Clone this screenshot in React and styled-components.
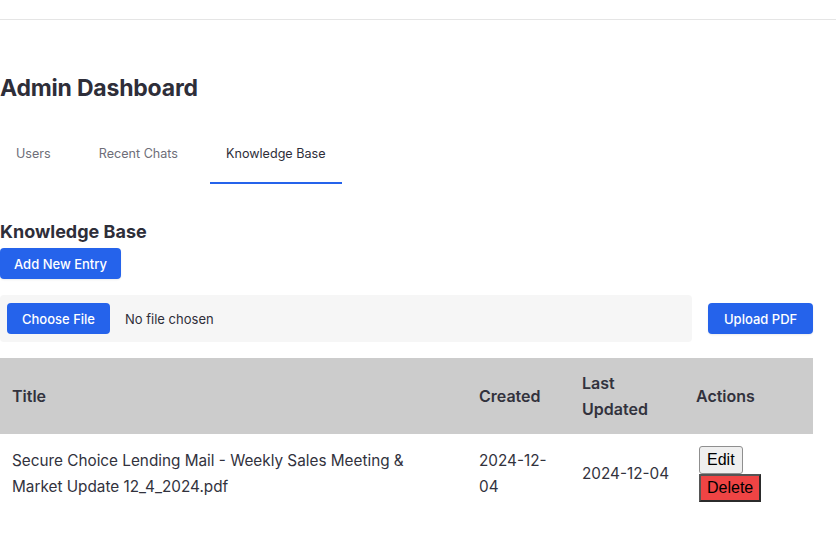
import styled, { createGlobalStyle } from 'styled-components';

const GlobalStyle = createGlobalStyle`
  body {
    margin: 0;
    background: #ffffff;
    font-family: Inter, "Noto Sans", sans-serif;
    color: #32323d;
  }
`;

const entries = [
  {
    id: 1,
    title: 'Secure Choice Lending Mail - Weekly Sales Meeting & Market Update 12_4_2024.pdf',
    created: '2024-12-04',
    updated: '2024-12-04',
  },
];

const tabs = ['Users', 'Recent Chats', 'Knowledge Base'];

export default function App() {
  return (
    <>
      <GlobalStyle />
      <StTopBar />
      <StMain>
        <StTitle>Admin Dashboard</StTitle>
        <StTabs>
          {tabs.map((tab) => (
            <StTab key={tab} $active={tab === 'Knowledge Base'}>
              {tab}
            </StTab>
          ))}
        </StTabs>

        <StSectionTitle>Knowledge Base</StSectionTitle>
        <StButton>Add New Entry</StButton>

        <StUploadRow>
          <StFileBox>
            <StFileInput type="file" accept="application/pdf" />
          </StFileBox>
          <StButton $pad={16}>Upload PDF</StButton>
        </StUploadRow>

        <StTable>
          <colgroup>
            <col style={{ width: 467 }} />
            <col style={{ width: 103 }} />
            <col style={{ width: 114 }} />
            <col />
          </colgroup>
          <thead>
            <tr>
              <th>Title</th>
              <th>Created</th>
              <th>Last Updated</th>
              <th>Actions</th>
            </tr>
          </thead>
          <tbody>
            {entries.map((entry) => (
              <tr key={entry.id}>
                <td>{entry.title}</td>
                <td>{entry.created}</td>
                <td>{entry.updated}</td>
                <td>
                  <StActions>
                    <StEditButton>Edit</StEditButton>
                    <StDeleteButton>Delete</StDeleteButton>
                  </StActions>
                </td>
              </tr>
            ))}
          </tbody>
        </StTable>
      </StMain>
    </>
  );
}

const StTopBar = styled.header`
  height: 19px;
  border-bottom: 1px solid #e5e5e5;
`;

const StMain = styled.main`
  width: 813px;
`;

const StTitle = styled.h1`
  margin: 52px 0 0;
  font-size: 23px;
  line-height: 32px;
  font-weight: 700;
  letter-spacing: -0.2px;
  color: #2e2e39;
`;

const StTabs = styled.nav`
  display: flex;
  gap: 16px;
  margin-top: 29px;
`;

const StTab = styled.div`
  padding: 11px 16px 18px;
  font-size: 12.6px;
  line-height: 20px;
  color: ${({ $active }) => ($active ? '#2e2e39' : '#6e6e78')};
  border-bottom: 2px solid ${({ $active }) => ($active ? '#2563eb' : 'transparent')};
  cursor: pointer;
`;

const StSectionTitle = styled.h2`
  margin: 36px 0 0;
  font-size: 18px;
  line-height: 24px;
  font-weight: 700;
  color: #2e2e39;
`;

const StButton = styled.button`
  display: block;
  flex-shrink: 0;
  height: 31px;
  margin-top: 4px;
  padding: 0 ${({ $pad }) => $pad ?? 14}px;
  border: none;
  border-radius: 4px;
  background: #2563eb;
  color: #ffffff;
  font-family: Inter, "Noto Sans", sans-serif;
  font-size: 13px;
  font-weight: 500;
  white-space: nowrap;
  box-shadow: 0 1px 2px rgba(0, 0, 0, 0.08);
  cursor: pointer;
`;

const StUploadRow = styled.div`
  display: flex;
  align-items: center;
  gap: 16px;
  margin-top: 16px;

  ${StButton} {
    margin-top: 0;
  }
`;

const StFileBox = styled.div`
  flex: 0 0 692px;
  box-sizing: border-box;
  padding: 8px 7px;
  background: #f6f6f6;
  border-radius: 4px;
`;

const StFileInput = styled.input`
  display: block;
  font-family: Inter, "Noto Sans", sans-serif;
  font-size: 13px;
  color: #2e2e39;

  &::file-selector-button {
    height: 31px;
    margin-right: 15px;
    padding: 0 15px;
    border: none;
    border-radius: 4px;
    background: #2563eb;
    color: #ffffff;
    font-family: Inter, "Noto Sans", sans-serif;
    font-size: 13px;
    font-weight: 500;
    cursor: pointer;
  }
`;

const StTable = styled.table`
  width: 813px;
  margin-top: 16px;
  border-collapse: collapse;
  table-layout: fixed;
  line-height: 26px;

  th {
    padding: 12px;
    background: #cccccc;
    text-align: left;
    font-size: 16px;
    font-weight: 600;
    color: #32323d;
  }
  td {
    padding: 12px;
    vertical-align: middle;
    font-size: 15.3px;
    color: #32323d;
  }
`;

const StActions = styled.div`
  display: flex;
  flex-direction: column;
  align-items: flex-start;
  padding-left: 3px;
`;

const StEditButton = styled.button`
  box-sizing: border-box;
  height: 28px;
  padding: 0 7px;
  border: 1px solid #8f8f8f;
  border-radius: 3px;
  background: #efefef;
  color: #000000;
  font-family: "Liberation Sans", Arial, sans-serif;
  font-size: 16px;
  cursor: pointer;
`;

const StDeleteButton = styled.button`
  box-sizing: border-box;
  height: 28px;
  padding: 0 6px;
  border: 2px solid #2b2b2b;
  border-top-color: #555555;
  border-left-color: #555555;
  background: #ef4444;
  color: #000000;
  font-family: "Liberation Sans", Arial, sans-serif;
  font-size: 16px;
  cursor: pointer;
`;
